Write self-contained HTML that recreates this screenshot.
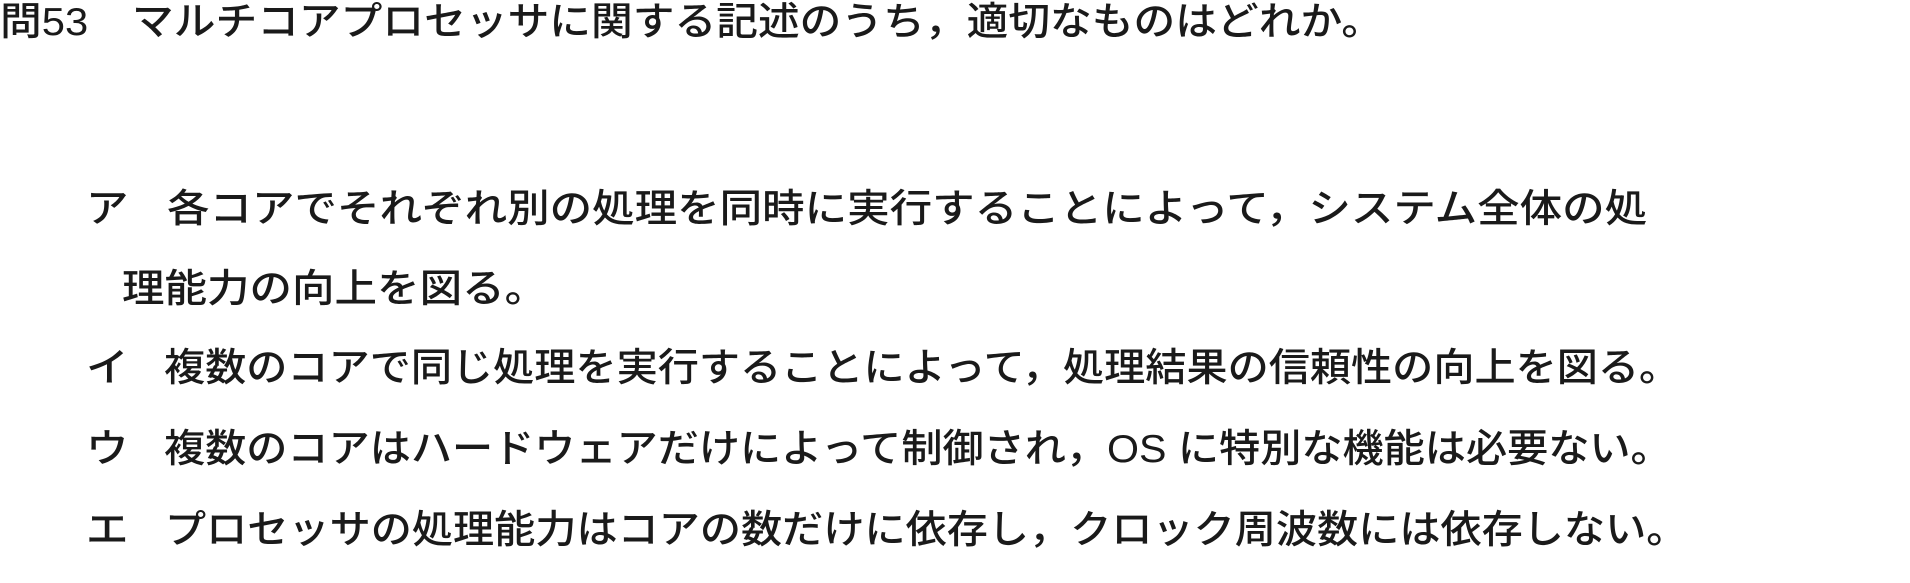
<!DOCTYPE html>
<html><head><meta charset="utf-8"><style>
html,body{margin:0;padding:0;background:#fff;width:1910px;height:583px;overflow:hidden}
.t{position:absolute;font-family:"Liberation Sans","Noto Sans CJK JP",sans-serif;font-weight:500;font-size:39px;line-height:39px;color:#1a1a1a;white-space:nowrap;transform:scaleX(1.09);transform-origin:0 50%}
.h{transform:scaleX(1.07)}
.n{transform:scaleX(1.055)}
</style></head><body>
<div class="t h" style="left:0;top:3px">問53</div>
<div class="t h" style="left:132px;top:3px">マルチコアプロセッサに関する記述のうち，適切なものはどれか。</div>
<div class="t" style="left:86px;top:190px">ア</div>
<div class="t" style="left:167px;top:190px">各コアでそれぞれ別の処理を同時に実行することによって，システム全体の処</div>
<div class="t" style="left:122px;top:270px">理能力の向上を図る。</div>
<div class="t" style="left:86px;top:349px">イ</div>
<div class="t n" style="left:164px;top:349px">複数のコアで同じ処理を実行することによって，処理結果の信頼性の向上を図る。</div>
<div class="t" style="left:86px;top:430px">ウ</div>
<div class="t n" style="left:164px;top:430px">複数のコアはハードウェアだけによって制御され，OS に特別な機能は必要ない。</div>
<div class="t" style="left:86px;top:511px">エ</div>
<div class="t n" style="left:165px;top:511px">プロセッサの処理能力はコアの数だけに依存し，クロック周波数には依存しない。</div>
</body></html>
